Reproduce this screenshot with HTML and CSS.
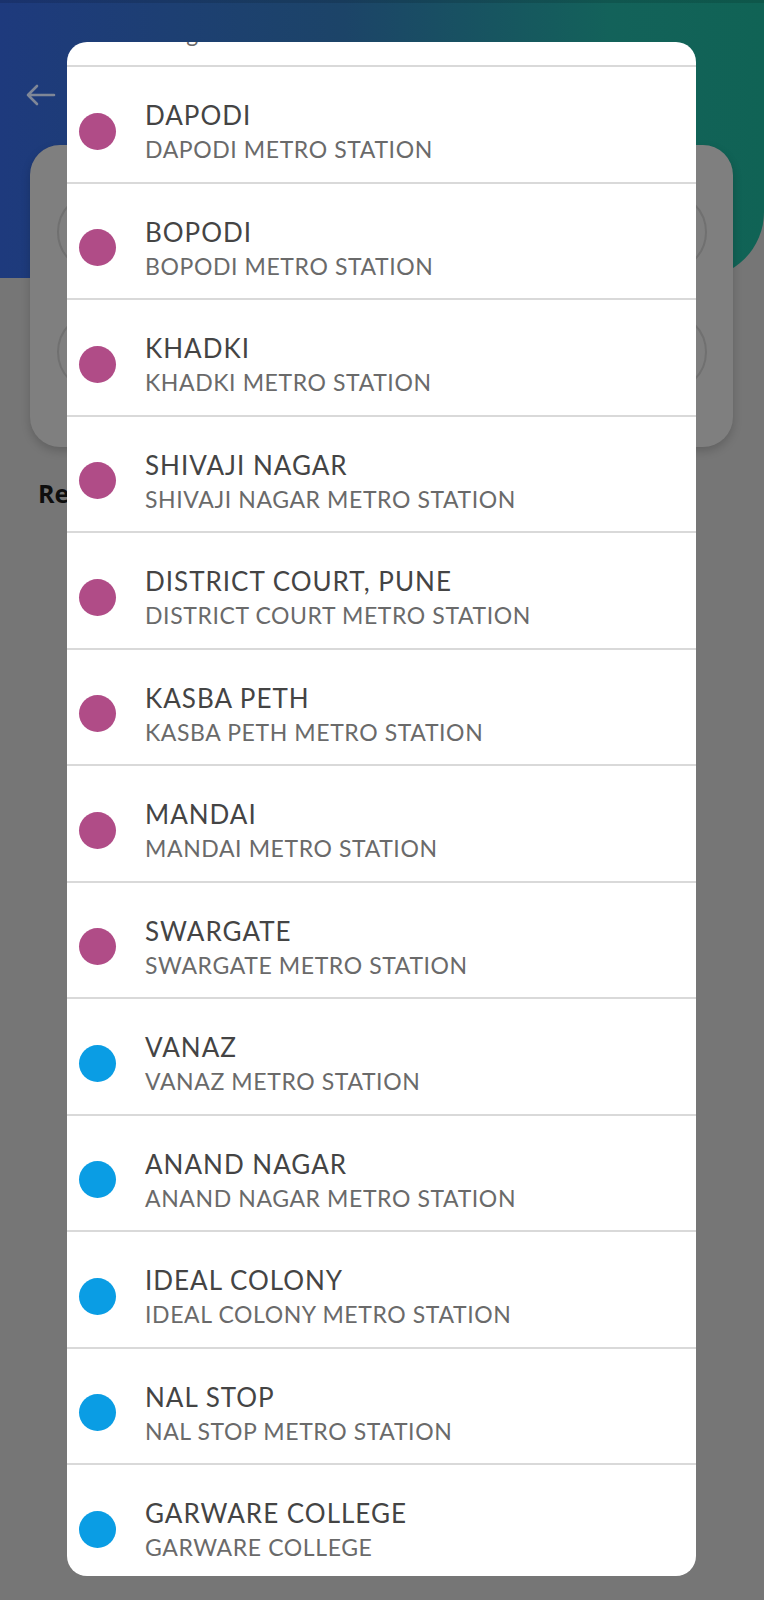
FILE: index.html
```html
<!DOCTYPE html>
<html lang="en">
<head>
<meta charset="utf-8">
<title>Select Station</title>
<link rel="stylesheet" href="styles.css">
</head>
<body>
<div class="screen">
  <header class="appbar">
    <svg class="back" width="32" height="24" viewBox="0 0 32 24" aria-hidden="true">
      <path d="M30 12H4M13 3L4 12l9 9" fill="none" stroke="currentColor" stroke-width="2.6" stroke-linecap="round" stroke-linejoin="round"/>
    </svg>
  </header>
  <section class="search-card">
    <div class="field"></div>
    <div class="field"></div>
  </section>
  <h2 class="section-title">Re</h2>
</div>

<div class="dialog">
  <ul class="station-list">
    <li class="station"><span class="dot purple"></span><div class="names"><div class="name">PHUGEWADI</div><div class="sub">Phugewadi Metro Station</div></div></li>
    <li class="station"><span class="dot purple"></span><div class="names"><div class="name">DAPODI</div><div class="sub">DAPODI METRO STATION</div></div></li>
    <li class="station"><span class="dot purple"></span><div class="names"><div class="name">BOPODI</div><div class="sub">BOPODI METRO STATION</div></div></li>
    <li class="station"><span class="dot purple"></span><div class="names"><div class="name">KHADKI</div><div class="sub">KHADKI METRO STATION</div></div></li>
    <li class="station"><span class="dot purple"></span><div class="names"><div class="name">SHIVAJI NAGAR</div><div class="sub">SHIVAJI NAGAR METRO STATION</div></div></li>
    <li class="station"><span class="dot purple"></span><div class="names"><div class="name">DISTRICT COURT, PUNE</div><div class="sub">DISTRICT COURT METRO STATION</div></div></li>
    <li class="station"><span class="dot purple"></span><div class="names"><div class="name">KASBA PETH</div><div class="sub">KASBA PETH METRO STATION</div></div></li>
    <li class="station"><span class="dot purple"></span><div class="names"><div class="name">MANDAI</div><div class="sub">MANDAI METRO STATION</div></div></li>
    <li class="station"><span class="dot purple"></span><div class="names"><div class="name">SWARGATE</div><div class="sub">SWARGATE METRO STATION</div></div></li>
    <li class="station"><span class="dot blue"></span><div class="names"><div class="name">VANAZ</div><div class="sub">VANAZ METRO STATION</div></div></li>
    <li class="station"><span class="dot blue"></span><div class="names"><div class="name">ANAND NAGAR</div><div class="sub">ANAND NAGAR METRO STATION</div></div></li>
    <li class="station"><span class="dot blue"></span><div class="names"><div class="name">IDEAL COLONY</div><div class="sub">IDEAL COLONY METRO STATION</div></div></li>
    <li class="station"><span class="dot blue"></span><div class="names"><div class="name">NAL STOP</div><div class="sub">NAL STOP METRO STATION</div></div></li>
    <li class="station"><span class="dot blue"></span><div class="names"><div class="name">GARWARE COLLEGE</div><div class="sub">GARWARE COLLEGE</div></div></li>
  </ul>
</div>
</body>
</html>
```

FILE: styles.css
```css
* { box-sizing: border-box; }

html, body {
  margin: 0;
  padding: 0;
}

body {
  width: 764px;
  height: 1600px;
  overflow: hidden;
  background: #767676;
  font-family: Lato, "Open Sans", sans-serif;
  position: relative;
}

/* dimmed page underneath the dialog */
.screen {
  display: flex;
  flex-direction: column;
}

.appbar {
  height: 278px;
  background: linear-gradient(90deg, #1e3a7d 0%, #1c4468 45%, #13625a 80%, #106355 100%);
  border-bottom-right-radius: 66px;
  border-top: 3px solid rgba(0, 0, 0, 0.12);
  padding: 80px 0 0 24px;
}

.back {
  color: #7f8797;
  display: block;
}

.search-card {
  margin: -133px 31px 0 30px;
  height: 302px;
  background: #7f7f7f;
  border-radius: 30px;
  box-shadow: 0 4px 10px rgba(0, 0, 0, 0.18);
  display: flex;
  flex-direction: column;
  gap: 40px;
  padding: 47px 26px 0 27px;
}

.field {
  height: 80px;
  border: 2px solid #707070;
  border-radius: 40px;
}

.section-title {
  margin: 30px 0 0 38px;
  font-family: "Open Sans", sans-serif;
  font-size: 25px;
  font-weight: 700;
  color: #0e0e0e;
  line-height: 32px;
}

/* dialog */
.dialog {
  position: absolute;
  left: 67px;
  top: 42px;
  width: 629px;
  height: 1534px;
  background: #ffffff;
  border-radius: 20px;
  overflow: hidden;
}

.station-list {
  list-style: none;
  margin: -91.5px 0 0 0;
  padding: 0;
}

.station {
  height: 116.5px;
  border-bottom: 2px solid #d9d9d9;
  display: flex;
  align-items: center;
  padding: 14px 0 0 12px;
}

.dot {
  width: 37px;
  height: 37px;
  border-radius: 50%;
  flex: none;
  margin-right: 29px;
}

.dot.purple { background: #b04c87; }
.dot.blue { background: #0a9de4; }

.names {
  display: flex;
  flex-direction: column;
}

.name {
  font-size: 26px;
  line-height: 36px;
  color: #444444;
  letter-spacing: 1px;
}

.sub {
  font-size: 23px;
  line-height: 32px;
  color: #6a6a6a;
  letter-spacing: 0.6px;
}
```
